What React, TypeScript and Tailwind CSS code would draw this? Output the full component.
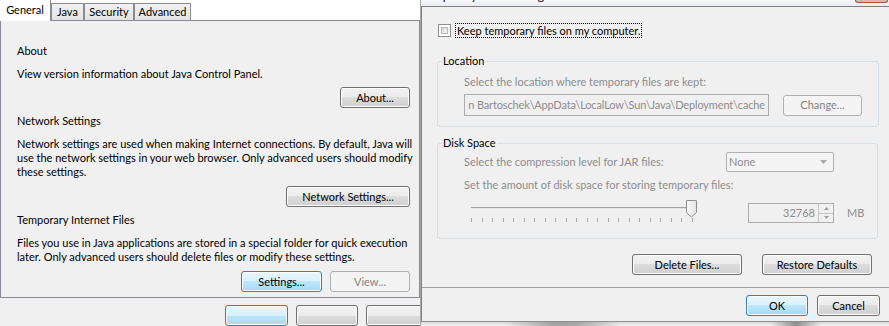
const btn =
  "flex h-[21px] items-center justify-center rounded-[3px] border border-[#707070] bg-[linear-gradient(#f2f2f2_0%,#ebebeb_50%,#dddddd_50%,#cfcfcf_100%)] shadow-[inset_0_0_0_1px_#fcfcfc] text-black";
const btnBlue =
  "flex h-[21px] items-center justify-center rounded-[3px] border border-[#3c7fb1] bg-[linear-gradient(#eaf6fd_0%,#d9f0fc_50%,#bee6fd_50%,#a7d9f5_100%)] shadow-[inset_0_0_0_1px_#f4fbfe] text-black";
const btnOff =
  "flex h-[21px] items-center justify-center rounded-[3px] border border-[#adb2b5] bg-[#f4f4f4] text-[#838383]";

const ticks = Array.from({ length: 22 }, (_, i) => 0.5 + Math.round(i * 10.5));

function Slider() {
  return (
    <svg width="230" height="23" className="ml-[7px] shrink-0">
      <rect x="0" y="7" width="222" height="1" fill="#a3a3a3" />
      <rect x="0" y="8" width="222" height="1" fill="#e6e6e6" />
      {ticks.map((x) => (
        <line key={x} x1={x} x2={x} y1="18" y2="22" stroke="#a8a8a8" strokeWidth="1" />
      ))}
      <defs>
        <linearGradient id="thumb" x1="0" y1="0" x2="1" y2="0">
          <stop offset="0" stopColor="#fbfbfb" />
          <stop offset="1" stopColor="#e2e2e2" />
        </linearGradient>
      </defs>
      <path d="M215.5 0.5 h10 v12 l-5 4.5 l-5 -4.5 z" fill="url(#thumb)" stroke="#8e8f8f" />
    </svg>
  );
}

function Spinner() {
  return (
    <div className="ml-[47px] flex h-[20px] w-[86px] border border-[#abadb3] bg-[#f0f0f0]">
      <div className="flex flex-1 items-center justify-end pr-[3px] text-[#8d8d8d]">32768</div>
      <div className="flex w-[15px] flex-col border-l border-[#c6c6c6]">
        <div className="flex flex-1 items-center justify-center border-b border-[#c6c6c6]">
          <svg width="5" height="3">
            <path d="M0 3 L2.5 0 L5 3 z" fill="#a0a0a0" />
          </svg>
        </div>
        <div className="flex flex-1 items-center justify-center">
          <svg width="5" height="3">
            <path d="M0 0 L2.5 3 L5 0 z" fill="#a0a0a0" />
          </svg>
        </div>
      </div>
    </div>
  );
}

export default function App() {
  return (
    <div className="flex h-[326px] w-[889px] overflow-hidden bg-[#f0f0f0] font-['Lato',sans-serif] text-[11px] leading-[14px] text-black">
      {/* ── Left: Java Control Panel, General tab ── */}
      <div className="flex w-[420px] shrink-0 flex-col overflow-hidden">
        <div className="flex h-[20px] items-end bg-white">
          <div className="relative z-10 -mb-px flex h-[21px] w-[51px] items-center justify-center border-r border-[#898c95] bg-white pb-[2px]">
            General
          </div>
          <div className="flex h-[17px] w-[33px] items-center justify-center border-t border-r border-l border-[#898c95] bg-[linear-gradient(#f2f2f2,#e3e3e3)]">
            Java
          </div>
          <div className="flex h-[17px] w-[50px] items-center justify-center border-t border-r border-l border-[#898c95] bg-[linear-gradient(#f2f2f2,#e3e3e3)]">
            Security
          </div>
          <div className="flex h-[17px] w-[57px] items-center justify-center border-t border-r border-l border-[#898c95] bg-[linear-gradient(#f2f2f2,#e3e3e3)]">
            Advanced
          </div>
        </div>

        <div className="flex h-[295px] flex-col border border-[#898c95] bg-[#f0f0f0] pr-[9px] pl-[16px]">
          <p className="mt-[23px]">About</p>
          <p className="mt-[9px]">View version information about Java Control Panel.</p>
          <div className="mt-[6px] flex justify-end">
            <button className={`${btn} w-[70px]`}>About...</button>
          </div>

          <p className="mt-[6px]">Network Settings</p>
          <p className="mt-[9px] whitespace-nowrap">
            Network settings are used when making Internet connections. By default, Java will
            <br />
            use the network settings in your web browser. Only advanced users should modify
            <br />
            these settings.
          </p>
          <div className="mt-[7px] flex justify-end">
            <button className={`${btn} w-[124px]`}>Network Settings...</button>
          </div>

          <p className="mt-[6px]">Temporary Internet Files</p>
          <p className="mt-[9px] whitespace-nowrap">
            Files you use in Java applications are stored in a special folder for quick execution
            <br />
            later. Only advanced users should delete files or modify these settings.
          </p>
          <div className="mt-[7px] flex justify-end gap-[8px]">
            <button className={`${btnBlue} w-[81px]`}>Settings...</button>
            <button className={`${btnOff} w-[80px]`}>View...</button>
          </div>
        </div>

        {/* dialog buttons peeking below */}
        <div className="flex gap-[8px] pt-[7px] pl-[225px]">
          <div className={`${btnBlue} w-[63px] shrink-0`} />
          <div className={`${btn} w-[62px] shrink-0`} />
          <div className={`${btn} w-[62px] shrink-0`} />
        </div>
      </div>

      {/* ── Right: Temporary Files Settings dialog ── */}
      <div className="flex w-[469px] shrink-0 flex-col border-l border-[#a9a9a9]">
        <div className="flex h-[6px] overflow-hidden bg-[linear-gradient(#f6f7f9,#e9ecf0)]">
          <span className="-mt-[11px] text-[12px] whitespace-nowrap">Temporary Files Settings</span>
          <div className="flex-1" />
          <div className="mr-[1px] h-[3px] w-[33px] rounded-b-[3px] border-r border-b border-l border-[#b4503e] bg-[#e7b3a6]" />
        </div>

        <div className="flex flex-1 flex-col border-t border-l border-[#7f7f7f] bg-[#f0f0f0]">
          {/* checkbox */}
          <div className="mt-[16px] flex h-[15px] items-center pl-[16px]">
            <div className="flex h-[13px] w-[13px] border border-[#8e8f8f] bg-white p-[2px]">
              <div className="flex-1 border border-[#b4b7bb] bg-[linear-gradient(135deg,#d5d6d8,#f7f7f7)]" />
            </div>
            <span className="ml-[4px] flex h-[15px] items-center border border-dotted border-black px-[1px]">
              Keep temporary files on my computer.
            </span>
          </div>

          {/* Location */}
          <fieldset className="mt-[16px] ml-[15px] w-[441px] rounded-[3px] border border-[#d5dfe5] pr-[16px] pb-[10px] pl-[26px]">
            <legend className="-ml-[22px] px-[1px]">Location</legend>
            <p className="mt-[7px] text-[#8d8d8d]">Select the location where temporary files are kept:</p>
            <div className="mt-[5px] flex items-center">
              <div className="flex h-[22px] w-[305px] items-center justify-end overflow-hidden border border-[#adadad] bg-[#f0f0f0] pr-[3px] tracking-[-0.15px] whitespace-nowrap text-[#8d8d8d]">
                n Bartoschek\AppData\LocalLow\Sun\Java\Deployment\cache
              </div>
              <button className={`${btnOff} ml-[14px] w-[79px]`}>Change...</button>
            </div>
          </fieldset>

          {/* Disk Space */}
          <fieldset className="mt-[9px] ml-[15px] w-[441px] rounded-[3px] border border-[#d5dfe5] pb-[15px] pl-[26px]">
            <legend className="-ml-[22px] px-[1px]">Disk Space</legend>
            <div className="mt-[2px] flex h-[20px] items-center">
              <span className="w-[262px] text-[#8d8d8d]">Select the compression level for JAR files:</span>
              <div className="flex h-[20px] w-[108px] items-center justify-between rounded-[2px] border border-[#adb2b5] bg-[#f4f4f4] pr-[6px] pl-[2px] text-[#8d8d8d]">
                None
                <svg width="7" height="4">
                  <path d="M0 0 L3.5 4 L7 0 z" fill="#a9a9a9" />
                </svg>
              </div>
            </div>
            <p className="mt-[6px] text-[#8d8d8d]">Set the amount of disk space for storing temporary files:</p>
            <div className="mt-[8px] flex h-[23px] items-end">
              <Slider />
              <Spinner />
              <span className="ml-[13px] self-center pt-[3px] text-[#8d8d8d]">MB</span>
            </div>
          </fieldset>

          <div className="mt-[15px] flex gap-[20px] pl-[210px]">
            <button className={`${btn} w-[110px]`}>Delete Files...</button>
            <button className={`${btn} w-[110px]`}>Restore Defaults</button>
          </div>

          <div className="mt-[12px] h-px bg-[#a0a0a0]" />

          <div className="mt-[7px] flex gap-[9px] pl-[324px]">
            <button className={`${btnBlue} w-[62px]`}>OK</button>
            <button className={`${btn} w-[63px]`}>Cancel</button>
          </div>
          <div className="flex-1" />
        </div>

        <div className="flex h-[5px] border-t border-[#8f8f8f] bg-[linear-gradient(#d9d9d9,#f2f2f2)]">
          <div className="ml-[84px] w-[116px] bg-[linear-gradient(90deg,transparent,#7a7a7a_40%,#7a7a7a_60%,transparent)] opacity-60" />
          <div className="ml-[150px] w-[50px] bg-[linear-gradient(90deg,transparent,#555_50%,transparent)] opacity-60" />
        </div>
      </div>
    </div>
  );
}
